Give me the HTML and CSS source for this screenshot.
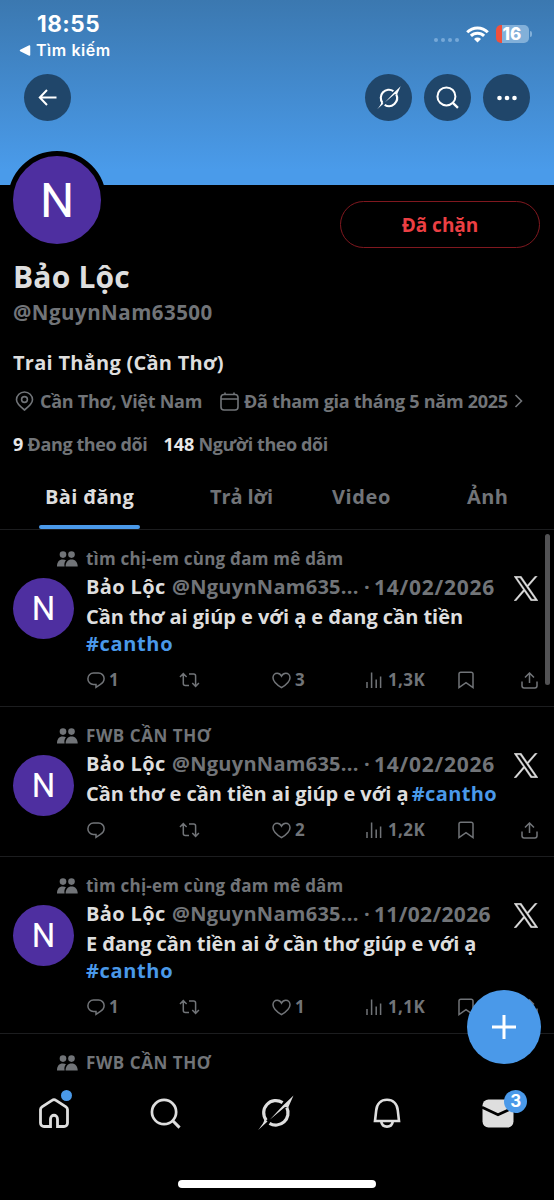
FILE: index.html
```html
<!DOCTYPE html>
<html lang="vi">
<head>
<meta charset="utf-8">
<title>Bảo Lộc</title>
<link rel="stylesheet" href="styles.css">
</head>
<body>
<svg class="defs" width="0" height="0">
  <symbol id="grok" viewBox="0 0 36 36"><path d="M8.200 25.200A12.200 12.200 0 0 1 24.600 7.600M28.800 12.500A12.200 12.200 0 0 1 11.500 28.300" fill="none" stroke="currentColor" stroke-width="3.200"/><path d="M35.500 .5L30.200 12.500L27 12L12 24.500L25 10.500ZM.2 35L9.500 26.500 6.500 23.500C6.500 27 4 30 .2 35Z" fill="currentColor"/></symbol>
  <symbol id="search" viewBox="0 0 32 32"><circle cx="14.500" cy="14.500" r="12.500" fill="none" stroke="currentColor" stroke-width="2.800"/><path d="M23.500 23.500l7 7" stroke="currentColor" stroke-width="3.200"/></symbol>
  <symbol id="people" viewBox="0 0 21 16"><g fill="currentColor"><circle cx="6" cy="3.600" r="3.300"/><circle cx="14.500" cy="3.600" r="3.300"/><path d="M7.600 15.500H0C0 11 2 8.400 5.800 8.400c1.300 0 2.300.3 3.200.8-1.400 1.500-2 3.600-1.400 6.300z"/><path d="M8.600 15.500c0-4.400 2.300-7.100 6-7.100s6.100 2.700 6.100 7.100z"/></g></symbol>
  <symbol id="reply" viewBox="0 0 18 17"><path d="M6.500 1h5a5.600 5.600 0 0 1 5.600 5.600c0 2.600-1.400 4.500-3.700 5.800L9 15.300v-2.800H6.500A5.600 5.600 0 0 1 .9 6.700 5.600 5.600 0 0 1 6.500 1z"/></symbol>
  <symbol id="repost" viewBox="0 0 21 16"><path d="M1 5l3.300-3.500L7.600 5M4.300 2v9.500a2 2 0 0 0 2 2H10M13.300 11l3.300 3.500L19.900 11M16.600 14V4a2 2 0 0 0-2-2H10"/></symbol>
  <symbol id="heart" viewBox="0 0 19 17"><path d="M9.500 15.700C4.500 12.500 1 9.500 1 5.700 1 3 2.900 1.200 5.200 1.200c1.900 0 3.300 1 4.300 2.900 1-1.900 2.400-2.900 4.300-2.900 2.300 0 4.200 1.800 4.200 4.500 0 3.800-3.500 6.800-8.500 10z"/></symbol>
  <symbol id="views" viewBox="0 0 16 16"><path d="M1 16v-6M5.600 16V.5M10.200 16V7.500M14.600 16V4.500"/></symbol>
  <symbol id="mark" viewBox="0 0 16 18"><path d="M1 16.500V3a1.800 1.800 0 0 1 1.800-1.800h10.400A1.800 1.800 0 0 1 15 3v13.500l-7-4.800z"/></symbol>
  <symbol id="share" viewBox="0 0 17 17"><path d="M4 5.500L8.500 1 13 5.500M8.500 1.500V11M1 9.500v4.300A2.200 2.200 0 0 0 3.200 16h10.600a2.200 2.200 0 0 0 2.200-2.200V9.500"/></symbol>
  <symbol id="xlogo" viewBox="0 0 1200 1227"><path fill="currentColor" stroke="currentColor" stroke-width="22" d="M714.163 519.284L1160.890 0H1055.030L667.137 450.887L357.328 0H0L468.492 681.821L0 1226.370H105.866L515.491 750.218L842.672 1226.370H1200L714.137 519.284ZM569.165 687.828L521.697 619.934L144.011 79.694H306.615L611.412 515.685L658.880 583.579L1055.080 1150.300H892.476L569.165 687.854Z"/></symbol>
</svg>
<div class="screen">
  <header class="banner">
    <div class="status">
      <div class="clock"><div class="time">18:55</div><div class="back-app"><svg width="12" height="11" viewBox="0 0 12 11"><path d="M1.500 5.500L10.500 1v9z" fill="#fff" stroke="#fff" stroke-width="1.500" stroke-linejoin="round"/></svg><span>Tìm kiếm</span></div></div>
      <div class="signals">
        <span class="dots"><i></i><i></i><i></i><i></i></span>
        <svg width="23" height="17" viewBox="0 0 23 17" fill="none" stroke="#fff" stroke-width="3"><path d="M1.200 6.200a14.600 14.600 0 0 1 20.600 0M4.900 9.900a9.300 9.300 0 0 1 13.200 0"/><path d="M11.500 16.500L8 13a5 5 0 0 1 7 0z" fill="#fff" stroke="none"/></svg>
        <span class="battery">16</span><i class="cap"></i>
      </div>
    </div>
    <div class="toolbar">
      <span class="round"><svg width="19" height="17" viewBox="0 0 19 17" fill="none" stroke="#fff" stroke-width="2"><path d="M9 1L1.800 8.500 9 16M2 8.500h16.500"/></svg></span>
      <span class="round grok"><svg width="24" height="24"><use href="#grok"/></svg></span>
      <span class="round"><svg width="23" height="23"><use href="#search"/></svg></span>
      <span class="round"><svg width="20" height="6" viewBox="0 0 20 6" fill="#fff"><circle cx="2.500" cy="3" r="2.300"/><circle cx="10" cy="3" r="2.300"/><circle cx="17.500" cy="3" r="2.300"/></svg></span>
    </div>
  </header>
  <section class="profile">
    <div class="top"><div class="avatar big">N</div><div class="blocked">Đã chặn</div></div>
    <h1>Bảo Lộc</h1>
    <div class="handle">@NguynNam63500</div>
    <div class="bio">Trai Thẳng (Cần Thơ)</div>
    <div class="meta">
      <svg width="19" height="20" viewBox="0 0 19 20"><path d="M9.500 19C5 15.500 1.500 12.500 1.500 8.800a8 7.800 0 0 1 16 0c0 3.700-3.500 6.700-8 10.200z"/><circle cx="9.500" cy="8.500" r="2.900"/></svg>
      <span class="place">Cần Thơ, Việt Nam</span>
      <svg width="19" height="19" viewBox="0 0 19 19"><rect x="1" y="2.500" width="17" height="15.500" rx="3"/><path d="M1 7h17M5 .5V3M14 .5V3"/></svg>
      <span class="joined">Đã tham gia tháng 5 năm 2025</span>
      <svg width="9" height="14" viewBox="0 0 9 14"><path d="M1.500 1l6 6-6 6"/></svg>
    </div>
    <div class="stats"><span><b>9</b> Đang theo dõi</span><span><b>148</b> Người theo dõi</span></div>
  </section>
  <nav class="tabs"><span class="active">Bài đăng</span><span class="replies">Trả lời</span><span class="video">Video</span><span class="photos">Ảnh</span></nav>
  <main class="feed">
    <article class="post">
      <div class="context"><svg width="21" height="16"><use href="#people"/></svg><span>tìm chị-em cùng đam mê dâm</span></div>
      <div class="row"><div class="avatar">N</div>
        <div class="body">
          <div class="who"><b>Bảo Lộc</b><span class="at">@NguynNam635...</span><span class="sep">·</span><span class="date">14/02/2026</span><svg class="x" width="24" height="25"><use href="#xlogo"/></svg></div>
          <p>Cần thơ ai giúp e với ạ e đang cần tiền<br><a>#cantho</a></p>
          <div class="actions"><span><svg width="18" height="17"><use href="#reply"/></svg>1</span><span><svg width="21" height="16"><use href="#repost"/></svg></span><span><svg width="19" height="17"><use href="#heart"/></svg>3</span><span class="v"><svg width="16" height="16"><use href="#views"/></svg>1,3K</span><span><svg width="16" height="18"><use href="#mark"/></svg></span><span><svg width="17" height="17"><use href="#share"/></svg></span></div>
        </div></div>
    </article>
    <article class="post">
      <div class="context caps"><svg width="21" height="16"><use href="#people"/></svg><span>FWB CẦN THƠ</span></div>
      <div class="row"><div class="avatar">N</div>
        <div class="body">
          <div class="who"><b>Bảo Lộc</b><span class="at">@NguynNam635...</span><span class="sep">·</span><span class="date">14/02/2026</span><svg class="x" width="24" height="25"><use href="#xlogo"/></svg></div>
          <p>Cần thơ e cần tiền ai giúp e với ạ <a class="inline">#cantho</a></p>
          <div class="actions"><span><svg width="18" height="17"><use href="#reply"/></svg></span><span><svg width="21" height="16"><use href="#repost"/></svg></span><span><svg width="19" height="17"><use href="#heart"/></svg>2</span><span class="v"><svg width="16" height="16"><use href="#views"/></svg>1,2K</span><span><svg width="16" height="18"><use href="#mark"/></svg></span><span><svg width="17" height="17"><use href="#share"/></svg></span></div>
        </div></div>
    </article>
    <article class="post">
      <div class="context"><svg width="21" height="16"><use href="#people"/></svg><span>tìm chị-em cùng đam mê dâm</span></div>
      <div class="row"><div class="avatar">N</div>
        <div class="body">
          <div class="who"><b>Bảo Lộc</b><span class="at">@NguynNam635...</span><span class="sep">·</span><span class="date narrow">11/02/2026</span><svg class="x" width="24" height="25"><use href="#xlogo"/></svg></div>
          <p class="tight">E đang cần tiền ai ở cần thơ giúp e với ạ<br><a>#cantho</a></p>
          <div class="actions"><span><svg width="18" height="17"><use href="#reply"/></svg>1</span><span><svg width="21" height="16"><use href="#repost"/></svg></span><span><svg width="19" height="17"><use href="#heart"/></svg>1</span><span class="v"><svg width="16" height="16"><use href="#views"/></svg>1,1K</span><span><svg width="16" height="18"><use href="#mark"/></svg></span><span><svg width="17" height="17"><use href="#share"/></svg></span></div>
        </div></div>
    </article>
    <article class="post last">
      <div class="context caps"><svg width="21" height="16"><use href="#people"/></svg><span>FWB CẦN THƠ</span></div>
    </article>
  </main>
  <div class="scrollbar"></div>
  <div class="fab"><svg width="24" height="24" viewBox="0 0 24 24"><path d="M12 0v24M0 12h24" stroke="#fff" stroke-width="3"/></svg></div>
  <footer class="dock">
    <div class="icons">
      <span class="item"><svg width="30" height="30" viewBox="0 0 30 30" fill="none" stroke="currentColor" stroke-width="2.800"><path d="M11.500 28.500H5a3.500 3.500 0 0 1-3.500-3.500V11.500c0-1.200.5-2 1.500-2.700L13 2.300c1.300-.9 2.700-.9 4 0l10 6.500c1 .7 1.500 1.500 1.500 2.700V25a3.500 3.500 0 0 1-3.500 3.500h-6.500V21c0-5-7-5-7 0z"/></svg><i class="dot"></i></span>
      <span class="item"><svg width="31" height="31"><use href="#search"/></svg></span>
      <span class="item"><svg width="36" height="36"><use href="#grok"/></svg></span>
      <span class="item"><svg width="28" height="30" viewBox="0 0 28 30" fill="none" stroke="currentColor" stroke-width="2.600"><path d="M2 23L3.200 12.500C3.800 6 8 1.800 14 1.800S24.200 6 24.800 12.500L26 23zM8.200 23.500c1 6.800 10.600 6.800 11.600 0"/></svg></span>
      <span class="item"><svg width="32" height="29" viewBox="0 0 32 29"><rect x=".5" y=".5" width="31" height="28" rx="6" fill="currentColor"/><path d="M0 8.300l16 7.500 16-7.500" fill="none" stroke="#000" stroke-width="2.800"/></svg><i class="badge">3</i></span>
    </div>
    <div class="homebar"></div>
  </footer>
</div>
</body>
</html>
```
FILE: styles.css
```css
* { box-sizing: border-box; }
body { margin: 0; background: #000; color: #dedede; font-family: "Open Sans", "Noto Sans", sans-serif; font-weight: 700; }
b { font-weight: 700; }
svg { display: block; flex: none; }
i { font-style: normal; }
.defs { position: absolute; }
.screen { position: relative; width: 554px; height: 1200px; overflow: hidden; background: #000; }
.banner { height: 185px; background: linear-gradient(#3b78b0, #4a9bea 92%); color: #fff; font-family: Inter, sans-serif; }
.status { display: flex; justify-content: space-between; height: 74px; padding: 10px 22px 0 19px; }
.time { font-size: 22.500px; line-height: 27px; padding-left: 18px; letter-spacing: .5px; }
.back-app { display: flex; align-items: center; gap: 5px; font-size: 16px; font-weight: 600; line-height: 26px; letter-spacing: .55px; }
.signals { display: flex; align-items: center; height: 48px; }
.dots { display: flex; gap: 3px; margin: 12px 7px 0 0; }
.dots i { width: 4px; height: 4px; border-radius: 50%; background: #76a8d8; }
.battery { width: 33px; height: 18px; margin-left: 7px; padding-right: 1px; border-radius: 5px; background: linear-gradient(90deg, #f0503c 6px, #82b0d9 6px); font-size: 17px; font-weight: 800; line-height: 18px; text-align: center; }
.cap { width: 2px; height: 6px; margin-left: 1px; border-radius: 0 2px 2px 0; background: #82b0d9; }
.toolbar { display: flex; gap: 12px; padding: 0 24px; }
.round { display: flex; align-items: center; justify-content: center; width: 47px; height: 47px; border-radius: 50%; background: #20466a; }
.grok { margin-left: auto; }
.profile { padding: 0 14px 0 13px; }
.top { display: flex; justify-content: space-between; height: 74px; }
.avatar { display: flex; align-items: center; justify-content: center; flex: none; width: 61px; height: 61px; border-radius: 50%; background: #4e2fa0; color: #fff; font: 400 33px Roboto, sans-serif; }
.big { width: 98px; height: 98px; margin: -34px 0 0 -5px; border: 5px solid #000; font-size: 48px; }
.blocked { width: 200px; height: 47px; margin-top: 16px; border: 1px solid #80181f; border-radius: 24px; color: #ec3f43; font-size: 19px; line-height: 46px; text-align: center; }
h1 { margin: 0; font-size: 30px; line-height: 36px; letter-spacing: .2px; }
.handle { color: #717478; font-size: 20.500px; line-height: 34px; letter-spacing: .48px; }
.bio { margin-top: 18px; font-size: 20px; line-height: 32px; letter-spacing: .27px; }
.meta { display: flex; align-items: center; height: 44px; padding-left: 2px; color: #717478; font-size: 18px; letter-spacing: -.27px; }
.meta svg { fill: none; stroke: #717478; stroke-width: 1.600; }
.place { margin: 0 18px 0 6px; }
.joined { margin: 0 6px 0 5px; }
.stats { display: flex; gap: 16px; height: 41px; align-items: center; color: #717478; font-size: 18px; letter-spacing: -.4px; }
.stats b { color: #e8e8e8; letter-spacing: 0; }
.tabs { display: flex; height: 66px; padding-left: 39px; border-bottom: 1px solid #1c1d1f; color: #717478; font-size: 20px; line-height: 66px; letter-spacing: .35px; white-space: nowrap; }
.tabs .active { position: relative; width: 101px; padding-left: 6px; color: #dedede; }
.active::after { content: ""; position: absolute; left: 0; right: 0; bottom: 0; height: 4px; border-radius: 2px; background: #4a99e9; }
.replies { width: 122px; margin-left: 70px; letter-spacing: -.1px; }
.video { width: 135px; letter-spacing: .6px; }
.post { padding: 17px 0 14px 13px; border-bottom: 1px solid #1c1d1f; }
.last { border: 0; }
.context { display: flex; align-items: center; gap: 8px; height: 24px; padding-left: 44px; color: #717478; font-size: 17px; letter-spacing: .22px; }
.context span { margin-top: -2px; }
.caps { letter-spacing: .55px; }
.row { display: flex; gap: 12px; }
.row .avatar { margin-top: 7px; }
.body { flex: 1; }
.who { display: flex; height: 32px; line-height: 32px; font-size: 20px; color: #717478; padding-right: 16px; }
.who b { width: 86px; color: #dedede; letter-spacing: .35px; }
.at { width: 192px; letter-spacing: .28px; }
.sep { width: 10px; }
.date { font-size: 21px; letter-spacing: .75px; }
.narrow { letter-spacing: .35px; }
.x { color: #dedede; margin: 5px 0 0 auto; overflow: visible; }
p { margin: 0; font-size: 20px; line-height: 27px; letter-spacing: -.03px; white-space: nowrap; }
.tight { letter-spacing: -.09px; }
p a { color: #4a99e9; letter-spacing: .65px; }
.inline { letter-spacing: .4px; margin-left: -2px; }
.actions { display: grid; grid-template-columns: 92px 93px 94px 92px 63px 20px; height: 24px; margin-top: 11px; padding-left: 1px; color: #717478; font-size: 17px; line-height: 24px; }
.actions span { display: flex; align-items: center; gap: 4px; }
.actions .v { gap: 6px; letter-spacing: .4px; }
.actions svg { fill: none; stroke: #717478; stroke-width: 1.500; overflow: visible; }
.scrollbar { position: absolute; left: 545px; top: 534px; width: 5px; height: 151px; border-radius: 3px; background: #525254; }
.fab { position: absolute; left: 467px; top: 990px; width: 74px; height: 74px; border-radius: 50%; background: #4a99e9; display: flex; align-items: center; justify-content: center; z-index: 2; }
.dock { position: absolute; left: 0; right: 0; bottom: 0; height: 122px; background: #000; }
.icons { display: grid; grid-template-columns: repeat(5, 1fr); height: 70px; margin: 0 1px 0 -1px; }
.item { position: relative; display: flex; align-items: center; justify-content: center; }
.dot { position: absolute; left: 62px; top: 12px; width: 11px; height: 11px; border-radius: 50%; background: #4a99e9; }
.badge { position: absolute; left: 62px; top: 12px; width: 23px; height: 23px; border-radius: 50%; background: #4a99e9; color: #fff; font: 700 17px/23px Inter, sans-serif; text-align: center; }
.homebar { width: 198px; height: 8px; margin: 32px auto 0; border-radius: 4px; background: #fff; }
```
